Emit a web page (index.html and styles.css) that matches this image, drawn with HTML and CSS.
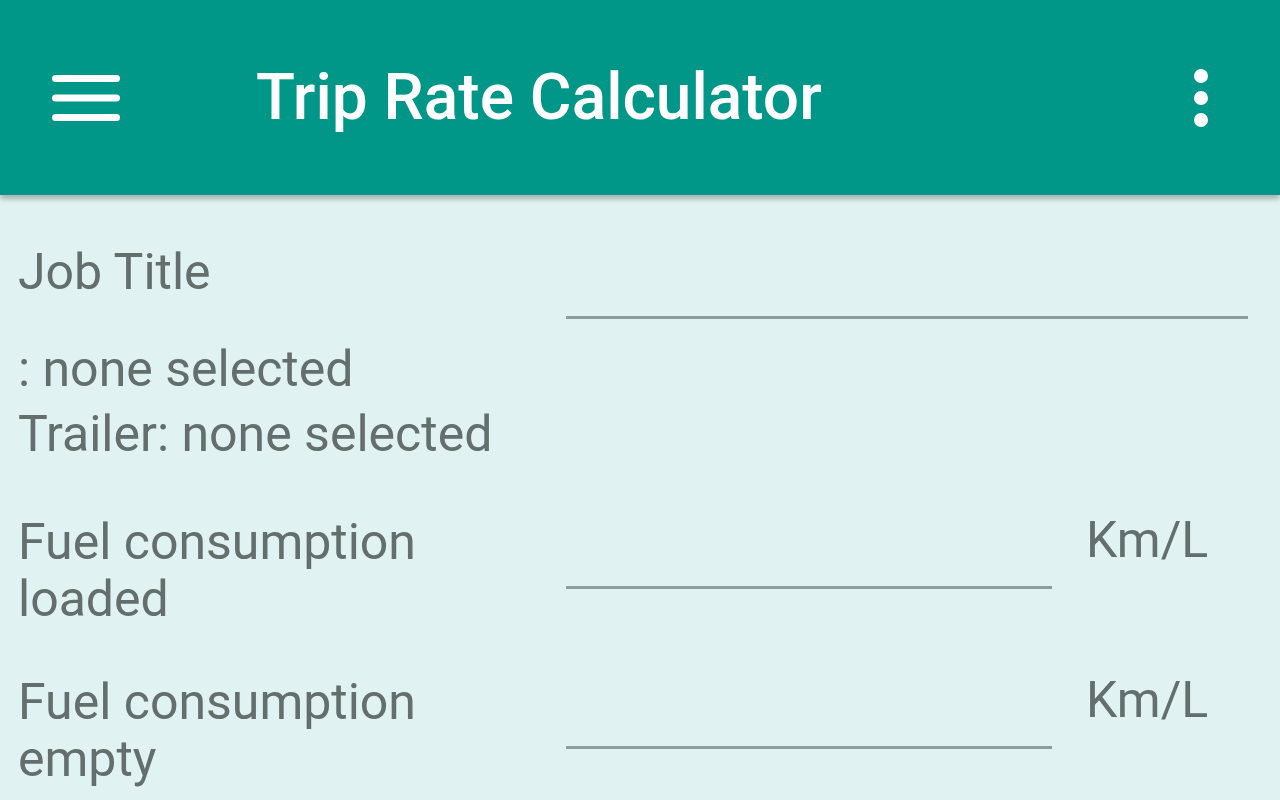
FILE: index.html
```html
<!DOCTYPE html>
<html>
<head>
<meta charset="utf-8">
<link rel="stylesheet" href="styles.css">
</head>
<body>
<header class="appbar">
  <div class="nav-icon">
    <svg width="68" height="46" viewBox="0 0 68 46"><rect x="0" y="0" width="68" height="7" rx="3.5" fill="#fff"/><rect x="0" y="19.5" width="68" height="7" rx="3.5" fill="#fff"/><rect x="0" y="39" width="68" height="7" rx="3.5" fill="#fff"/></svg>
  </div>
  <h1 class="title">Trip Rate Calculator</h1>
  <div class="menu-icon">
    <svg width="16" height="60" viewBox="0 0 16 60"><circle cx="8" cy="8" r="7" fill="#fff"/><circle cx="8" cy="30" r="7" fill="#fff"/><circle cx="8" cy="52" r="7" fill="#fff"/></svg>
  </div>
</header>
<main class="content">
  <div class="row row-job">
    <div class="label">Job Title</div>
    <div class="field field-wide"></div>
  </div>
  <div class="info info-first">: none selected</div>
  <div class="info">Trailer: none selected</div>
  <div class="row row-fuel">
    <div class="label">Fuel consumption<br>loaded</div>
    <div class="field field-short"></div>
    <div class="unit">Km/L</div>
  </div>
  <div class="row row-fuel row-fuel-2">
    <div class="label">Fuel consumption<br>empty</div>
    <div class="field field-short"></div>
    <div class="unit">Km/L</div>
  </div>
</main>
</body>
</html>
```
FILE: styles.css
```css
html, body {
  margin: 0;
  padding: 0;
  height: 100%;
  overflow: hidden;
}
body {
  background: #e0f2f1;
  font-family: Roboto, "Noto Sans", sans-serif;
}
.appbar {
  height: 195px;
  background: #009688;
  display: flex;
  align-items: center;
  box-shadow: 0 4px 5px rgba(0,0,0,0.26);
  position: relative;
}
.nav-icon {
  margin-left: 52px;
  width: 68px;
  height: 46px;
  display: flex;
}
.title {
  margin: 0 0 0 136px;
  font-size: 64px;
  font-weight: 500;
  color: #fff;
  flex: 1;
  line-height: 1;
}
.menu-icon {
  margin-right: 71px;
  display: flex;
}
.content {
  padding: 49px 32px 0 18px;
  color: #636e6d;
  font-size: 50px;
}
.row {
  display: flex;
  align-items: flex-start;
}
.label {
  width: 548px;
  line-height: 57px;
  flex: none;
}
.field {
  border-bottom: 3px solid #8c9f9c;
}
.field-wide {
  flex: 1;
  height: 72px;
}
.field-short {
  width: 486px;
  height: 72px;
}
.unit {
  margin-left: 34px;
  margin-top: -2px;
  line-height: 57px;
}
.info {
  line-height: 65px;
}
.info-first {
  margin-top: 18px;
}
.row-fuel {
  margin-top: 47px;
}
.row-fuel-2 {
  margin-top: 46px;
}
```
